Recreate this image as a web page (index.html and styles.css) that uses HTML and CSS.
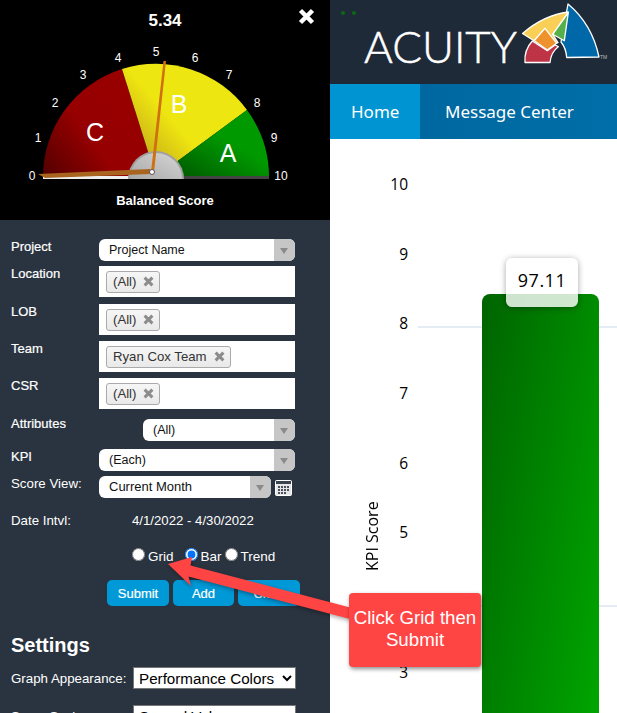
FILE: index.html
```html
<!DOCTYPE html>
<html>
<head>
	<title>Acuity Dashboard</title>
	<meta charset="utf-8">
	<link rel="stylesheet" href="styles.css">
</head>
<body>
<div class="page">

	<div class="side">
		<div class="gauge">
			<svg width="330" height="220" viewBox="0 0 330 220">
				<defs>
					<linearGradient id="gc" x1="0" y1="1" x2="1" y2="0.3">
						<stop offset="0" stop-color="#520000"/>
						<stop offset="0.45" stop-color="#960000"/>
						<stop offset="1" stop-color="#990000"/>
					</linearGradient>
					<linearGradient id="gb" x1="0" y1="1" x2="0.9" y2="0.3">
						<stop offset="0" stop-color="#b08a20"/>
						<stop offset="0.55" stop-color="#eee610"/>
						<stop offset="1" stop-color="#eee610"/>
					</linearGradient>
					<linearGradient id="ga" x1="0" y1="1" x2="0.6" y2="0.4">
						<stop offset="0" stop-color="#004d00"/>
						<stop offset="1" stop-color="#009a00"/>
					</linearGradient>
					<linearGradient id="gh" x1="0" y1="1" x2="1" y2="0">
						<stop offset="0" stop-color="#a8a8a8"/>
						<stop offset="1" stop-color="#d6d6d6"/>
					</linearGradient>
				</defs>
				<path d="M43 177A113 113 0 0 1 122 69L156 177Z" fill="url(#gc)"/>
				<path d="M122 69A113 113 0 0 1 247 110L156 177Z" fill="url(#gb)"/>
				<path d="M247 110A113 113 0 0 1 269 177L156 177Z" fill="url(#ga)"/>
				<rect x="43" y="176" width="86" height="3" fill="#eee"/>
				<rect x="183" y="176" width="86" height="3" fill="#444"/>
				<path d="M128 179A28 28 0 0 1 184 179Z" fill="#a0a0a0"/>
				<path d="M130 179A26 26 0 0 1 182 179Z" fill="url(#gh)"/>
				<path d="M38 174L150 169L151 174L45 178Z" fill="#a9651f"/>
				<path d="M163.500 61L166 61L154 172L151 172Z" fill="#d0700f"/>
				<circle cx="152" cy="172" r="2.500" fill="#fff" stroke="#555"/>
				<text class="g-val" x="165" y="26">5.34</text>
				<path class="g-close" d="M300.500 10.500L312.500 22.500M312.500 10.500L300.500 22.500"/>
				<text class="g-tick" x="32" y="180">0</text>
				<text class="g-tick" x="38" y="142">1</text>
				<text class="g-tick" x="55" y="107">2</text>
				<text class="g-tick" x="83" y="79">3</text>
				<text class="g-tick" x="118" y="62">4</text>
				<text class="g-tick" x="156" y="56">5</text>
				<text class="g-tick" x="195" y="62">6</text>
				<text class="g-tick" x="229" y="79">7</text>
				<text class="g-tick" x="257" y="107">8</text>
				<text class="g-tick" x="274" y="142">9</text>
				<text class="g-tick" x="281" y="180">10</text>
				<text class="g-grade" x="95" y="141">C</text>
				<text class="g-grade" x="179" y="113">B</text>
				<text class="g-grade" x="228" y="162">A</text>
				<text class="g-name" x="165" y="205">Balanced Score</text>
			</svg>
		</div>

		<div class="form">
			<div class="row">
				<div class="lbl">Project</div>
				<div class="dd"><span class="dd-text">Project Name</span><span class="dd-arrow"></span></div>
			</div>
			<div class="row r-loc">
				<div class="lbl">Location</div>
				<div class="multi"><span class="tag">(All)<i class="tag-x"></i></span></div>
			</div>
			<div class="row r-lob">
				<div class="lbl">LOB</div>
				<div class="multi"><span class="tag">(All)<i class="tag-x"></i></span></div>
			</div>
			<div class="row r-team">
				<div class="lbl">Team</div>
				<div class="multi"><span class="tag">Ryan Cox Team<i class="tag-x"></i></span></div>
			</div>
			<div class="row r-team">
				<div class="lbl">CSR</div>
				<div class="multi"><span class="tag">(All)<i class="tag-x"></i></span></div>
			</div>
			<div class="row r-attr">
				<div class="lbl lbl-wide">Attributes</div>
				<div class="dd dd-attr"><span class="dd-text">(All)</span><span class="dd-arrow"></span></div>
			</div>
			<div class="row r-kpi">
				<div class="lbl">KPI</div>
				<div class="dd"><span class="dd-text">(Each)</span><span class="dd-arrow"></span></div>
			</div>
			<div class="row r-score">
				<div class="lbl">Score View:</div>
				<div class="dd dd-score"><span class="dd-text">Current Month</span><span class="dd-arrow"></span></div>
				<svg class="cal" width="17" height="16" viewBox="0 0 17 16">
					<rect x="0.500" y="0.500" width="16" height="15" rx="1" fill="#e6e6e6" stroke="#fff"/>
					<rect x="1" y="1" width="15" height="3" fill="#3a4450"/>
					<path d="M3 6h2v2H3zM6 6h2v2H6zM9 6h2v2H9zM12 6h2v2h-2zM3 9h2v2H3zM6 9h2v2H6zM9 9h2v2H9zM12 9h2v2h-2zM3 12h2v2H3zM6 12h2v2H6zM9 12h2v2H9z" fill="#48525e"/>
				</svg>
			</div>
			<div class="row r-date">
				<div class="lbl">Date Intvl:</div>
				<div class="date-val">4/1/2022 - 4/30/2022</div>
			</div>
			<div class="views">
				<input type="radio" name="view" class="rb" id="vg"><label for="vg" class="rb-lbl">Grid</label>
				<input type="radio" name="view" class="rb rb-bar" id="vb" checked><label for="vb" class="rb-lbl">Bar</label>
				<input type="radio" name="view" class="rb rb-trend" id="vt"><label for="vt" class="rb-lbl">Trend</label>
			</div>
			<div class="btns">
				<button class="btn">Submit</button>
				<button class="btn btn-add">Add</button>
				<button class="btn">Clear</button>
			</div>
			<h2 class="set-h">Settings</h2>
			<div class="set-row">
				<div class="set-lbl">Graph Appearance:</div>
				<select class="set-sel"><option>Performance Colors</option></select>
			</div>
			<div class="set-row set-row2">
				<div class="set-lbl">Score Scale:</div>
				<select class="set-sel"><option>Scored Value</option></select>
			</div>
		</div>
	</div>

	<div class="main">
		<div class="top">
			<div class="dots"><i></i><i></i></div>
			<div class="brand">ACUITY</div>
			<svg class="mark" width="90" height="66" viewBox="520 0 90 66">
				<g stroke="#fff" stroke-width="1.300" stroke-linejoin="round">
					<path d="M568 4Q592 24 599 57L566.700 57.500Q566 48 561 42L568 4Z" fill="#0068a8"/>
					<path d="M522.500 33.500Q544 15 568.300 12L552.700 34.300L558 42.700L554 43.500L545 28.500L534 40.700Z" fill="#f9cf55"/>
					<path d="M568.300 12.700L552.700 34.300L564.300 40.700Z" fill="#55b04a"/>
					<path d="M525 62.500Q524 50 532.300 41L547.300 50.700L555 45L558.300 46.700Q551 52 550 62.500Z" fill="#bf3346"/>
					<path d="M545 28.300L556.700 43.300L547.300 50L534.300 40.700Z" fill="#ee922d"/>
				</g>
				<text class="tm" x="600" y="59">TM</text>
			</svg>
		</div>
		<div class="nav">
			<div class="nav-item on">Home</div>
			<div class="nav-item">Message Center</div>
		</div>
		<div class="chart">
			<div class="y-title">KPI Score</div>
			<div class="axis">
				<span>10</span><span>9</span><span>8</span><span>7</span><span>6</span><span>5</span><span></span><span>3</span>
			</div>
			<div class="plot">
				<div class="gl gl-8"></div>
				<div class="gl gl-4"></div>
				<div class="bar">
					<div class="tip">97.11</div>
				</div>
			</div>
		</div>
	</div>

	<!-- annotation on top of the screenshot -->
	<svg class="arrow" width="617" height="713" viewBox="0 0 617 713">
		<path d="M168 564L192 557L190.500 565.500L352 608L350 619L188.500 576.500L191 586Z" fill="#ff4444"/>
	</svg>
	<div class="callout">Click Grid then Submit</div>

</div>
</body>
</html>
```

FILE: styles.css
```css
*, *:before, *:after { box-sizing: border-box; }

html, body { margin: 0; padding: 0; }

body { font-family: "Liberation Sans", Arial, sans-serif; background-color: #fff; }

.page { position: relative; display: flex; width: 617px; height: 713px; overflow: hidden; }

/* left panel */
.side { width: 330px; flex: none; background-color: #2a3440; color: #fff; }

.gauge { height: 220px; background-color: #000; }
.gauge svg { display: block; }
.gauge text { fill: #fff; text-anchor: middle; font-family: "Liberation Sans", Arial, sans-serif; }
.g-val { font-size: 17px; font-weight: bold; }
.g-tick { font-size: 12px; }
.g-grade { font-size: 25px; }
.g-name { font-size: 13px; font-weight: bold; }
.g-close { stroke: #fff; stroke-width: 4.500; fill: none; }

.form { padding: 19px 0 0 11px; }

.row { display: flex; align-items: flex-start; }
.r-loc { margin-top: 5px; }
.r-lob { margin-top: 7px; }
.r-team { margin-top: 6px; }
.r-attr { margin-top: 10px; }
.r-kpi { margin-top: 8px; }
.r-score { margin-top: 5px; }
.r-date { margin-top: 15px; }

.lbl { width: 88px; flex: none; padding-top: 1px; font-size: 13px; line-height: 14px; color: #fff; -webkit-text-stroke: 0.200px #fff; }
.lbl-wide { width: 132px; margin-top: -3px; }
.r-score .lbl, .r-date .lbl { font-size: 13.300px; -webkit-text-stroke: 0; }

.dd { display: flex; width: 196px; height: 22px; border-radius: 6px; background-color: #fff; overflow: hidden; }
.dd-attr { width: 152px; }
.dd-score { width: 172px; }
.dd-text { flex: 1; padding-left: 10px; font-size: 12.500px; line-height: 23px; color: #111; }
.dd-score .dd-text { font-size: 13px; line-height: 21px; }
.dd-arrow { position: relative; width: 21px; background-color: #c6c6c6; }
.dd-arrow:after {
	content: ""; position: absolute; left: 6px; top: 9px;
	border-top: 6px solid #8a8a8a; border-left: 4px solid transparent; border-right: 4px solid transparent;
}

.multi { width: 196px; height: 31px; padding: 5px 7px; background-color: #fff; }
.tag {
	display: inline-flex; align-items: center; height: 22px; padding: 0 6px 1px 6px;
	border: 1px solid #aaa; border-radius: 3px;
	background: linear-gradient(#f6f6f6, #e9e9e9);
	font-size: 13.200px; color: #333;
}
.tag-x { position: relative; width: 9px; height: 9px; margin-left: 8px; }
.tag-x:before, .tag-x:after {
	content: ""; position: absolute; left: -1px; top: 3px; width: 11px; height: 3px; background-color: #8c8c8c;
}
.tag-x:before { transform: rotate(45deg); }
.tag-x:after { transform: rotate(-45deg); }

.cal { margin: 4px 0 0 4px; }

.date-val { margin-left: 33px; padding-top: 1px; font-size: 13.200px; line-height: 14px; }

.views { display: flex; align-items: center; height: 16px; margin-top: 20px; padding-left: 121px; font-size: 13.500px; }
.rb { width: 13px; height: 13px; margin: -3px 3px 0 0; flex: none; }
.rb-lbl { margin-top: 1px; }
.rb-bar { margin-left: 11px; }
.rb-trend { margin-left: 3px; }

.btns { display: flex; gap: 4px; margin: 16px 0 0 96px; }
.btn {
	width: 62px; height: 26px; padding: 0; border: 0; border-radius: 5px;
	background-color: #0099d8; color: #fff;
	font-family: "Liberation Sans", Arial, sans-serif; font-size: 13px; -webkit-text-stroke: 0.200px #fff;
}
.btn-add { width: 61px; }

.set-h { margin: 27px 0 0 0; font-size: 20px; line-height: 24px; font-weight: bold; }

.set-row { display: flex; align-items: center; margin-top: 10px; }
.set-row2 { margin-top: 16px; }
.set-lbl { width: 122px; flex: none; font-size: 13.300px; }
.set-sel {
	width: 163px; height: 22px; padding: 0 0 0 1px; border: 1px solid #767676; border-radius: 0;
	background-color: #fff; color: #000;
	font-family: "Liberation Sans", Arial, sans-serif; font-size: 15.200px;
}

/* right side */
.main { flex: 1; display: flex; flex-direction: column; min-width: 0; }

.top { position: relative; height: 84px; background-color: #1f2a38; }
.dots { display: flex; gap: 7px; padding: 11px 0 0 11px; }
.dots i { display: block; width: 4px; height: 4px; border-radius: 50%; background-color: #0a6a12; }
.brand {
	position: absolute; left: 34px; top: 16px;
	font-family: "Lato", sans-serif; font-weight: 300; font-size: 44px; line-height: 60px;
	letter-spacing: 0; color: #fff; -webkit-text-stroke: 0.500px #fff;
}
.mark { position: absolute; left: 190px; top: 0; }
.tm { font-size: 5px; fill: #bbb; font-family: "Liberation Sans", Arial, sans-serif; }

.nav { display: flex; height: 55px; background: linear-gradient(90deg, #00659b, #006ea8); }
.nav-item { padding: 0 25px; font-family: "Noto Sans", sans-serif; font-size: 17px; line-height: 55px; color: #fff; }
.nav-item.on { width: 90px; padding: 0 21px; background-color: #0094d2; }

.chart { flex: 1; display: flex; min-height: 0; background-color: #fff; }

.y-title {
	width: 24px; margin: 359px 0 0 30px; height: 76px; flex: none;
	writing-mode: vertical-rl; transform: rotate(180deg);
	font-family: "Open Sans", sans-serif; font-size: 16px; line-height: 24px; text-align: center; color: #000;
}
.axis { width: 24px; flex: none; display: flex; flex-direction: column; padding-top: 11px; }
.axis span {
	display: block; height: 69.700px; line-height: 69.700px; text-align: right;
	font-family: "Open Sans", sans-serif; font-size: 15.500px; color: #000;
}

.plot { position: relative; flex: 1; padding: 155px 0 0 74px; }
.gl { position: absolute; left: 10px; right: 0; height: 2px; background-color: #e6ecf3; }
.gl-8 { top: 187px; }
.gl-4 { top: 466px; }
.bar {
	position: relative; width: 117px; height: 500px; border-radius: 8px 8px 0 0;
	background: linear-gradient(100deg, #006400, #00aa00);
}
.tip {
	position: absolute; left: 24px; top: -36px; width: 72px; height: 49px; padding-top: 10px;
	border-radius: 6px; background-color: rgba(255, 255, 255, 0.810);
	box-shadow: 0 1px 6px rgba(0, 0, 0, 0.350);
	font-family: "Open Sans", sans-serif; font-size: 18px; letter-spacing: 0.500px; text-align: center; color: #000;
}

/* annotation */
.arrow { position: absolute; left: 0; top: 0; filter: drop-shadow(1px 2px 2px rgba(0, 0, 0, 0.350)); }
.callout {
	position: absolute; left: 349px; top: 593px; width: 132px; height: 74px; padding: 14px 2px 0;
	border-radius: 4px; background-color: #ff4444; color: #fff;
	box-shadow: 1px 2px 4px rgba(0, 0, 0, 0.450);
	font-size: 18.700px; line-height: 22px; text-align: center;
}
```
